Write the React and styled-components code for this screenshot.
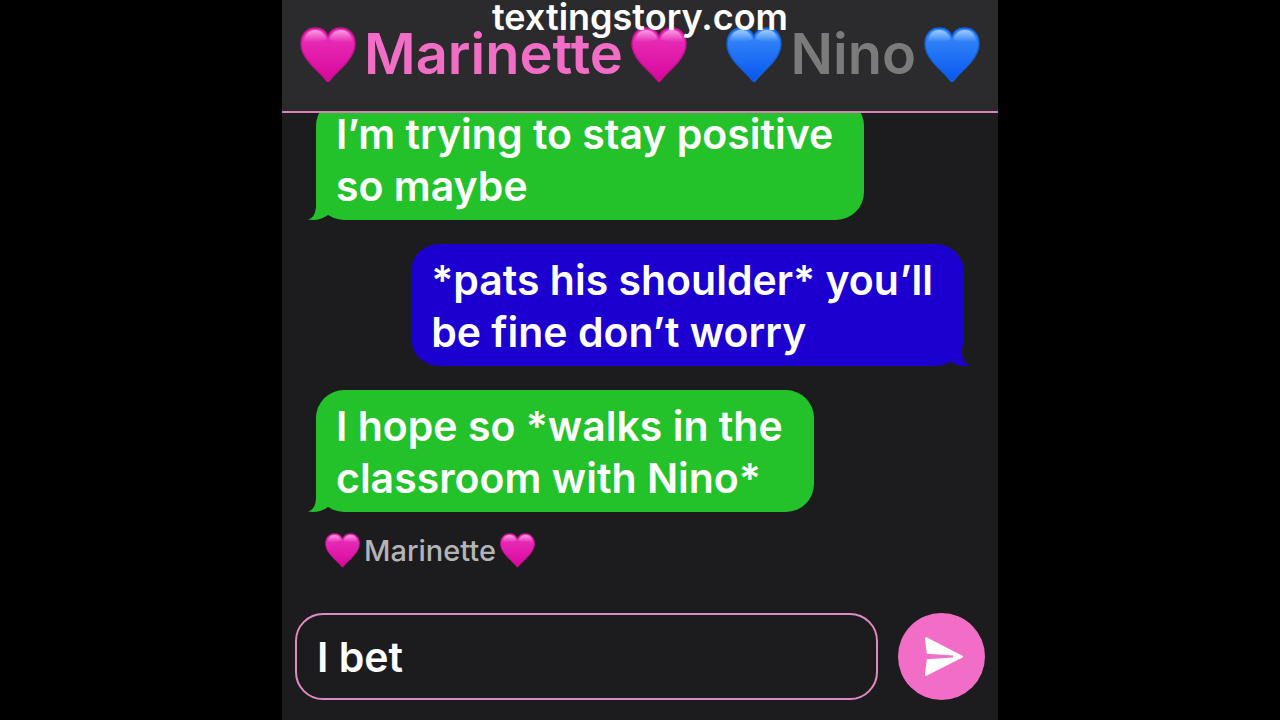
import React, { useId, useState } from "react";
import styled, { createGlobalStyle } from "styled-components";

const GlobalStyle = createGlobalStyle`
  * {
    box-sizing: border-box;
  }

  body {
    margin: 0;
    background: #000;
    font-family: Inter, "Liberation Sans", sans-serif;
  }
`;

const Phone = styled.main`
  position: relative;
  display: flex;
  flex-direction: column;
  width: 100%;
  max-width: 716px;
  height: 100vh;
  margin: 0 auto;
  background: #1c1c1e;
  overflow: hidden;
`;

const Watermark = styled.div`
  position: absolute;
  top: 0;
  left: 0;
  right: 0;
  color: #fff;
  font-size: 36px;
  font-weight: 600;
  line-height: 34px;
  text-align: center;
  pointer-events: none;
`;

const Header = styled.header`
  display: flex;
  justify-content: space-between;
  flex-shrink: 0;
  padding: 26px 18px 28px;
  background: #2b2b2d;
  border-bottom: 2px solid #d683b9;
`;

const Contact = styled.button`
  display: flex;
  align-items: center;
  gap: 8px;
  padding: 0;
  border: none;
  background: none;
  color: ${(props) => (props.$active ? "#f26ec6" : "#7b7b7c")};
  font-family: inherit;
  font-size: 56px;
  font-weight: 600;
  line-height: 57px;
  cursor: pointer;
`;

const Messages = styled.section`
  display: flex;
  flex: 1;
  flex-direction: column;
  justify-content: flex-end;
  gap: 24px;
  min-height: 0;
  padding: 0 34px;
  overflow: hidden;
`;

const Bubble = styled.div`
  position: relative;
  flex-shrink: 0;
  align-self: ${(props) => (props.$mine ? "flex-end" : "flex-start")};
  padding: 10px 31px 8px 20px;
  border-radius: 28px;
  background: ${(props) => (props.$mine ? "#1c00cf" : "#24c22a")};
  color: #fff;
  font-size: 41px;
  font-weight: 600;
  line-height: 52px;
  white-space: pre-line;
`;

const Tail = styled.svg`
  position: absolute;
  bottom: 0;
  ${(props) => (props.$mine ? "right: -6px; transform: scaleX(-1);" : "left: -8px;")}
  fill: ${(props) => (props.$mine ? "#1c00cf" : "#24c22a")};
`;

const Sender = styled.div`
  display: flex;
  align-items: center;
  gap: 4px;
  flex-shrink: 0;
  padding: 21px 43px 45px;
  color: #b4b4b6;
  font-size: 29px;
  font-weight: 500;
  line-height: 34px;
`;

const Composer = styled.form`
  display: flex;
  gap: 20px;
  flex-shrink: 0;
  padding: 0 13px 20px;
`;

const MessageInput = styled.input`
  flex: 1;
  min-width: 0;
  height: 87px;
  padding: 0 20px;
  border: 2px solid #e08ac3;
  border-radius: 28px;
  outline: none;
  background: #1c1c1e;
  color: #fff;
  font-family: inherit;
  font-size: 41px;
  font-weight: 600;
`;

const SendButton = styled.button`
  display: flex;
  align-items: center;
  justify-content: center;
  flex-shrink: 0;
  width: 87px;
  height: 87px;
  padding: 0;
  border: none;
  border-radius: 50%;
  background: #f26dc5;
  cursor: pointer;
`;

const heartColors = {
  pink: { shine: "#fba6e4", top: "#ea35bd", bottom: "#d8069c", edge: "#c9108f" },
  blue: { shine: "#a9d3ff", top: "#3c8dfa", bottom: "#0856f0", edge: "#1262dd" },
};

const heartPath =
  "M28 54.5C27 54.5 26 53 24 50.5C20 46 15 42 9 35C4 29 1 24 1 17C1 7 7 1 15.5 1C21.5 1 26 4 28 9.5C30 4 34.5 1 40.5 1C49 1 55 7 55 17C55 24 52 29 47 35C41 42 36 46 32 50.5C30 53 29 54.5 28 54.5Z";

function Heart({ color, size }) {
  const id = useId();
  const shades = heartColors[color];

  return (
    <svg width={size} height={size} viewBox="0 0 56 56" aria-hidden="true">
      <defs>
        <linearGradient id={`${id}fill`} x1="0" y1="0" x2="0" y2="1">
          <stop offset="0" stopColor={shades.top} />
          <stop offset="1" stopColor={shades.bottom} />
        </linearGradient>
        <linearGradient id={`${id}shine`} x1="0" y1="0" x2="0" y2="1">
          <stop offset="0" stopColor={shades.shine} stopOpacity="0.9" />
          <stop offset="1" stopColor={shades.shine} stopOpacity="0" />
        </linearGradient>
      </defs>
      <path d={heartPath} fill={`url(#${id}fill)`} stroke={shades.edge} strokeWidth="1.4" />
      <path
        d="M4 14C5 6 10 3 15.5 3C21 3 25 7 26.5 12C22 15 8 16 4 14Z"
        fill={`url(#${id}shine)`}
      />
      <path
        d="M52 14C51 6 46 3 40.5 3C35 3 31 7 29.5 12C34 15 48 16 52 14Z"
        fill={`url(#${id}shine)`}
      />
    </svg>
  );
}

const contacts = [
  { name: "Marinette", color: "pink" },
  { name: "Nino", color: "blue" },
];

const messages = [
  { text: "I’m trying to stay positive\nso maybe", mine: false },
  { text: "*pats his shoulder* you’ll\nbe fine don’t worry", mine: true },
  { text: "I hope so *walks in the\nclassroom with Nino*", mine: false },
];

function App() {
  const [active, setActive] = useState(0);
  const [draft, setDraft] = useState("I bet");
  const sender = contacts[active];

  return (
    <>
      <GlobalStyle />
      <Phone>
        <Header>
          {contacts.map((contact, index) => (
            <Contact
              key={contact.name}
              type="button"
              $active={index === active}
              onClick={() => setActive(index)}
            >
              <Heart color={contact.color} size={56} />
              {contact.name}
              <Heart color={contact.color} size={56} />
            </Contact>
          ))}
        </Header>
        <Messages>
          {messages.map((message) => (
            <Bubble key={message.text} $mine={message.mine}>
              {message.text}
              <Tail $mine={message.mine} width="28" height="30" viewBox="0 0 28 30">
                <path d="M8 0V17Q7 28 0 29.5Q11 31.5 20 25L24 0Z" />
              </Tail>
            </Bubble>
          ))}
        </Messages>
        <Sender>
          <Heart color={sender.color} size={35} />
          {sender.name}
          <Heart color={sender.color} size={35} />
        </Sender>
        <Composer onSubmit={(e) => e.preventDefault()}>
          <MessageInput
            type="text"
            aria-label="Message"
            value={draft}
            onChange={(e) => setDraft(e.target.value)}
          />
          <SendButton type="submit" aria-label="Send">
            <svg width="44" height="44" viewBox="0 0 44 44" aria-hidden="true">
              <path
                d="M7 2.5L42 20.4Q44 21.5 42 22.8L7 40.5Q4.6 41.2 5 39L6.8 24.2L33 22.6V20.6L6.8 18.8L5 4.2Q4.8 1.8 7 2.5Z"
                fill="#fff"
              />
            </svg>
          </SendButton>
        </Composer>
        <Watermark>textingstory.com</Watermark>
      </Phone>
    </>
  );
}

export default App;
